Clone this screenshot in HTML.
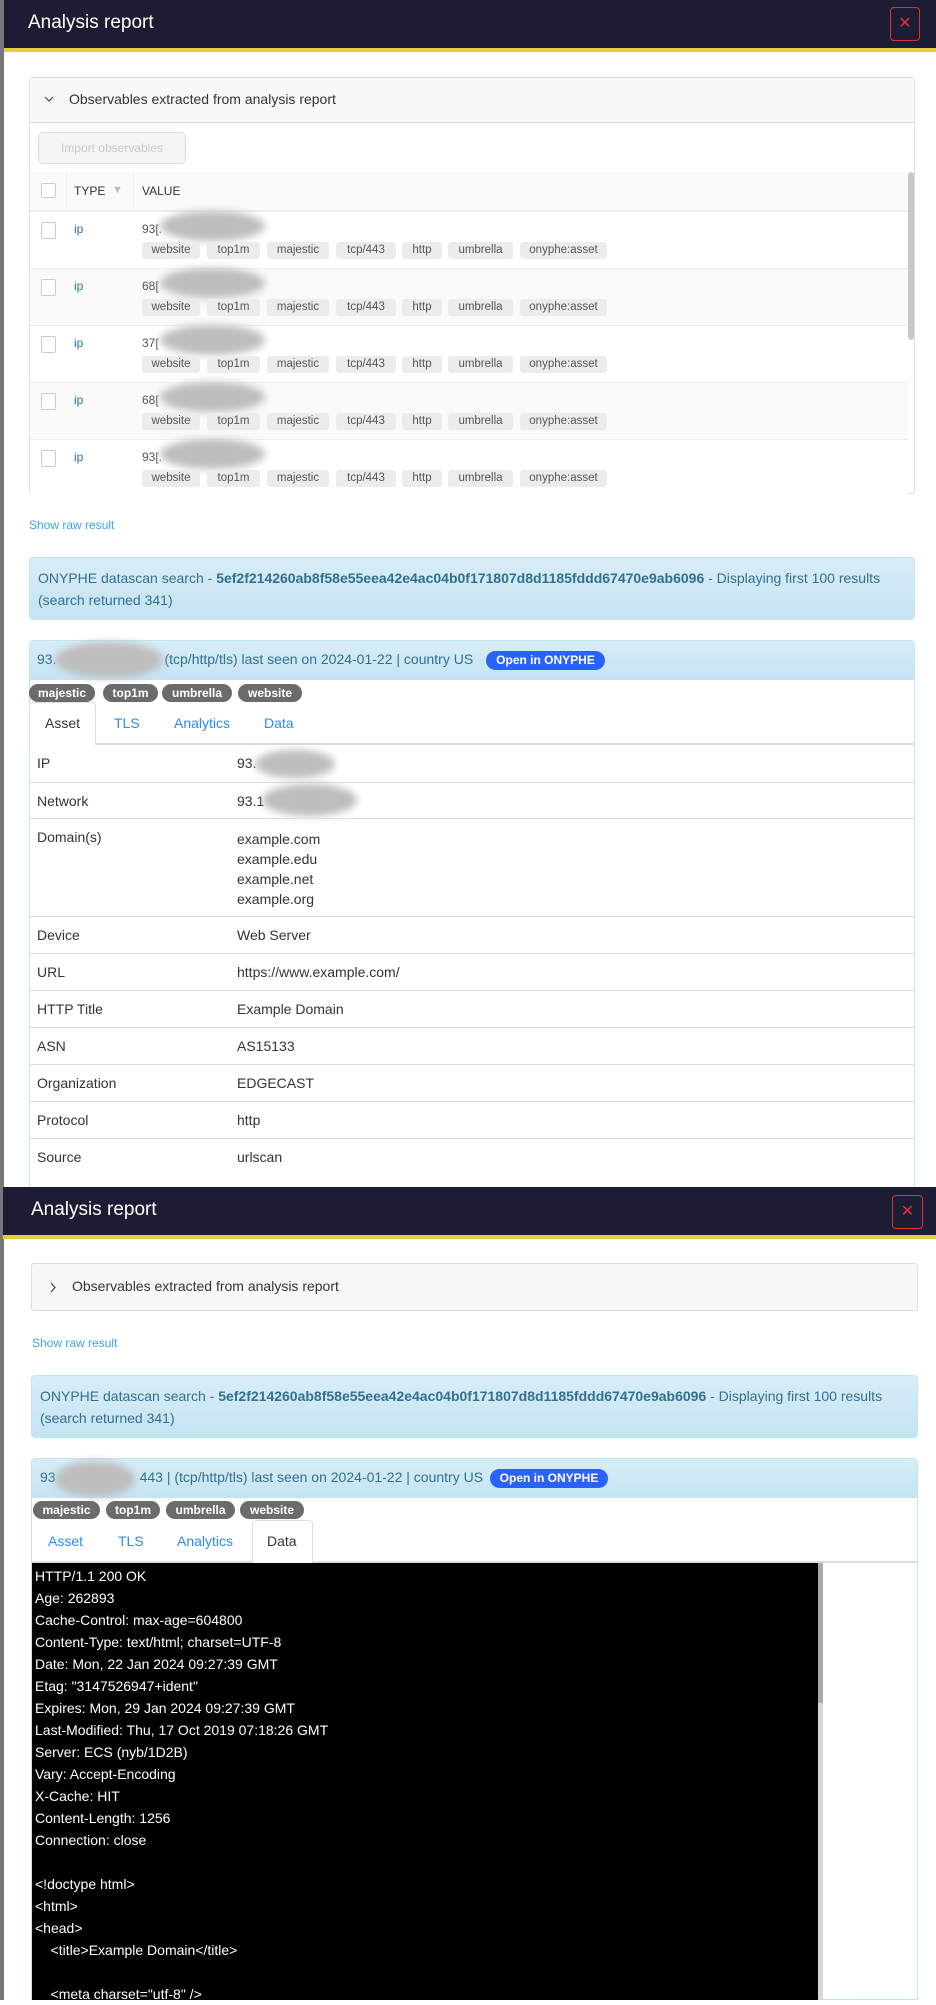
<!DOCTYPE html>
<html><head><meta charset="utf-8">
<style>
*{box-sizing:border-box;margin:0;padding:0}
body{width:936px;height:2000px;overflow:hidden;background:#fff;font-family:"Liberation Sans",sans-serif;position:relative;color:#333}
.a{position:absolute}
.hdr{background:#1c1c35;color:#fff;font-size:19px}
.ylw{background:#e8cd3a}
.close{border:1.5px solid #e0303a;border-radius:4px;color:#e0303a;font-size:16px;text-align:center}
.blur{background:#bdbdbd;border-radius:50%;filter:blur(4px)}
.tag{position:absolute;height:17px;background:#ececec;border-radius:3px;font-size:11.5px;color:#555;line-height:17px;text-align:center}
.cb{position:absolute;width:15px;height:15px;border:1px solid #ccc;border-radius:2px;background:#fff}
.dtag{position:absolute;height:18px;background:#6b6b6b;color:#fff;font-weight:bold;font-size:12px;border-radius:9px;line-height:18px;text-align:center}
.info{background:linear-gradient(#d9edf7,#c4e3f3);border:1px solid #bce8f1;border-radius:4px;color:#31708f;font-size:14px;line-height:22px}
.card{border:1px solid #bce8f1;border-radius:4px 4px 0 0}
.chd{background:linear-gradient(#d9edf7,#c4e3f3);color:#31708f;font-size:14px}
.open{background:#2962ff;color:#fff;font-weight:bold;font-size:12px;border-radius:10px;text-align:center;line-height:19px}
.tab{position:absolute;font-size:14px;color:#2a8cf0}
.row{position:absolute;left:30px;width:884px;border-top:1px solid #ddd;font-size:14px;color:#333}
.row span{position:absolute;top:10px}
.pre div{height:22px;line-height:22px;white-space:pre}
</style></head><body>
<div class="a" style="left:0;top:0;width:4px;height:2000px;background:#777"></div>

<!-- MODAL 1 -->
<div class="a hdr" style="left:4px;top:0;width:932px;height:48px"><div class="a" style="left:24px;top:12px">Analysis report</div></div>
<div class="a ylw" style="left:4px;top:48px;width:932px;height:4px"></div>
<div class="a close" style="left:890px;top:7px;width:30px;height:34px;line-height:31px">✕</div>

<div class="a" style="left:29px;top:77px;width:886px;height:417px;border:1px solid #ddd;border-radius:3px"></div>
<div class="a" style="left:30px;top:78px;width:884px;height:45px;background:#f8f8f8;border-bottom:1px solid #ddd"></div>
<svg class="a" style="left:44px;top:95px" width="10" height="8" viewBox="0 0 10 8"><path d="M1 2 L5 6 L9 2" fill="none" stroke="#444" stroke-width="1.2"/></svg>
<div class="a" style="left:69px;top:91px;font-size:14px;color:#333">Observables extracted from analysis report</div>
<div class="a" style="left:38px;top:132px;width:148px;height:32px;border:1px solid #ddd;border-radius:5px;background:#f5f5f5;color:#c8c8c8;font-size:12px;text-align:center;line-height:30px">Import observables</div>
<div class="a" style="left:30px;top:172px;width:878px;height:39px;background:#fafafa;border-bottom:1px solid #eee"></div>
<div class="a" style="left:66px;top:172px;width:1px;height:39px;background:#eee"></div>
<div class="a" style="left:133px;top:172px;width:1px;height:39px;background:#eee"></div>
<div class="cb" style="left:41px;top:183px"></div>
<div class="a" style="left:74px;top:184px;font-size:12px;color:#333">TYPE</div>
<div class="a" style="left:112px;top:184px;font-size:11px;color:#bbb">▼</div>
<div class="a" style="left:142px;top:184px;font-size:12px;color:#333">VALUE</div>
<div class="a" style="left:908px;top:172px;width:6px;height:168px;background:#c8c8c8;border-radius:3px"></div>

<div id="rows"></div>

<div class="a" style="left:29px;top:518px;font-size:12px;color:#3ea3e8">Show raw result</div>
<div class="a info" style="left:29px;top:557px;width:886px;height:63px;padding:9px 8px">ONYPHE datascan search - <b>5ef2f214260ab8f58e55eea42e4ac04b0f171807d8d1185fddd67470e9ab6096</b> - Displaying first 100 results (search returned 341)</div>

<div class="a card" style="left:29px;top:640px;width:886px;height:560px"></div>
<div class="a chd" style="left:30px;top:641px;width:884px;height:39px"></div>
<div class="a" style="left:37px;top:651px;font-size:14px;color:#31708f">93.<span style="display:inline-block;width:108px"></span>(tcp/http/tls) last seen on 2024-01-22 | country US</div>
<div class="a blur" style="left:55px;top:642px;width:108px;height:36px"></div>
<div class="a open" style="left:486px;top:651px;width:119px;height:19px">Open in ONYPHE</div>
<div class="dtag" style="left:29px;top:684px;width:66px">majestic</div>
<div class="dtag" style="left:103px;top:684px;width:55px">top1m</div>
<div class="dtag" style="left:162px;top:684px;width:70px">umbrella</div>
<div class="dtag" style="left:238px;top:684px;width:64px">website</div>
<div class="a" style="left:30px;top:743px;width:884px;height:2px;background:#ddd"></div>
<div class="a" style="left:29px;top:702px;width:67px;height:43px;border:1px solid #ddd;border-bottom:none;background:#fff;border-radius:4px 4px 0 0"></div>
<div class="tab" style="left:45px;top:715px;color:#333">Asset</div>
<div class="tab" style="left:114px;top:715px">TLS</div>
<div class="tab" style="left:174px;top:715px">Analytics</div>
<div class="tab" style="left:264px;top:715px">Data</div>

<div class="row" style="top:745px;height:37px;border-top:none"><span style="left:7px">IP</span><span style="left:207px">93.</span></div>
<div class="a blur" style="left:255px;top:750px;width:80px;height:28px"></div>
<div class="row" style="top:782px;height:36px"><span style="left:7px">Network</span><span style="left:207px">93.1</span></div>
<div class="a blur" style="left:262px;top:784px;width:95px;height:32px"></div>
<div class="row" style="top:818px;height:98px"><span style="left:7px">Domain(s)</span><span style="left:207px;line-height:20px">example.com<br>example.edu<br>example.net<br>example.org</span></div>
<div class="row" style="top:916px;height:37px"><span style="left:7px">Device</span><span style="left:207px">Web Server</span></div>
<div class="row" style="top:953px;height:37px"><span style="left:7px">URL</span><span style="left:207px">https://www.example.com/</span></div>
<div class="row" style="top:990px;height:37px"><span style="left:7px">HTTP Title</span><span style="left:207px">Example Domain</span></div>
<div class="row" style="top:1027px;height:37px"><span style="left:7px">ASN</span><span style="left:207px">AS15133</span></div>
<div class="row" style="top:1064px;height:37px"><span style="left:7px">Organization</span><span style="left:207px">EDGECAST</span></div>
<div class="row" style="top:1101px;height:37px"><span style="left:7px">Protocol</span><span style="left:207px">http</span></div>
<div class="row" style="top:1138px;height:50px"><span style="left:7px">Source</span><span style="left:207px">urlscan</span></div>

<!-- MODAL 2 -->
<div class="a" style="left:0;top:1187px;width:936px;height:813px;background:#fff"></div>
<div class="a" style="left:0;top:1187px;width:4px;height:813px;background:#777"></div>
<div class="a hdr" style="left:3px;top:1187px;width:933px;height:48px"><div class="a" style="left:28px;top:12px">Analysis report</div></div>
<div class="a ylw" style="left:3px;top:1235px;width:933px;height:4px"></div>
<div class="a close" style="left:892px;top:1195px;width:31px;height:34px;line-height:31px">✕</div>

<div class="a" style="left:31px;top:1263px;width:887px;height:48px;border:1px solid #ddd;border-radius:3px;background:#f8f8f8"></div>
<svg class="a" style="left:49px;top:1282px" width="8" height="11" viewBox="0 0 8 11"><path d="M2 1 L6 5.5 L2 10" fill="none" stroke="#444" stroke-width="1.2"/></svg>
<div class="a" style="left:72px;top:1278px;font-size:14px;color:#333">Observables extracted from analysis report</div>
<div class="a" style="left:32px;top:1336px;font-size:12px;color:#3ea3e8">Show raw result</div>
<div class="a info" style="left:31px;top:1375px;width:887px;height:63px;padding:9px 8px">ONYPHE datascan search - <b>5ef2f214260ab8f58e55eea42e4ac04b0f171807d8d1185fddd67470e9ab6096</b> - Displaying first 100 results (search returned 341)</div>

<div class="a card" style="left:31px;top:1458px;width:887px;height:542px"></div>
<div class="a chd" style="left:32px;top:1459px;width:885px;height:39px"></div>
<div class="a" style="left:40px;top:1469px;font-size:14px;color:#31708f">93<span style="display:inline-block;width:84px"></span>443 | (tcp/http/tls) last seen on 2024-01-22 | country US</div>
<div class="a blur" style="left:55px;top:1461px;width:80px;height:36px"></div>
<div class="a open" style="left:490px;top:1469px;width:118px;height:19px">Open in ONYPHE</div>
<div class="dtag" style="left:33px;top:1501px;width:67px">majestic</div>
<div class="dtag" style="left:106px;top:1501px;width:54px">top1m</div>
<div class="dtag" style="left:166px;top:1501px;width:69px">umbrella</div>
<div class="dtag" style="left:240px;top:1501px;width:64px">website</div>
<div class="a" style="left:32px;top:1561px;width:885px;height:2px;background:#ddd"></div>
<div class="a" style="left:252px;top:1520px;width:61px;height:43px;border:1px solid #ddd;border-bottom:none;background:#fff;border-radius:4px 4px 0 0"></div>
<div class="tab" style="left:48px;top:1533px">Asset</div>
<div class="tab" style="left:118px;top:1533px">TLS</div>
<div class="tab" style="left:177px;top:1533px">Analytics</div>
<div class="tab" style="left:267px;top:1533px;color:#333">Data</div>

<div class="a pre" style="left:32px;top:1563px;width:791px;height:437px;background:#000;color:#fff;font-size:14px;padding:2px 3px">
<div>HTTP/1.1 200 OK</div><div>Age: 262893</div><div>Cache-Control: max-age=604800</div><div>Content-Type: text/html; charset=UTF-8</div><div>Date: Mon, 22 Jan 2024 09:27:39 GMT</div><div>Etag: "3147526947+ident"</div><div>Expires: Mon, 29 Jan 2024 09:27:39 GMT</div><div>Last-Modified: Thu, 17 Oct 2019 07:18:26 GMT</div><div>Server: ECS (nyb/1D2B)</div><div>Vary: Accept-Encoding</div><div>X-Cache: HIT</div><div>Content-Length: 1256</div><div>Connection: close</div><div> </div><div>&lt;!doctype html&gt;</div><div>&lt;html&gt;</div><div>&lt;head&gt;</div><div>    &lt;title&gt;Example Domain&lt;/title&gt;</div><div> </div><div>    &lt;meta charset="utf-8" /&gt;</div>
</div>
<div class="a" style="left:818px;top:1563px;width:5px;height:437px;background:#d8d8d8"></div>
<div class="a" style="left:818px;top:1563px;width:5px;height:140px;background:#aaa"></div>

<script>
var vals=["93[.","68[","37[","68[","93[."];
var tags=[["website",142,58],["top1m",207,53],["majestic",267,62],["tcp/443",336,60],["http",402,40],["umbrella",448,65],["onyphe:asset",520,87]];
var h="";
for(var i=0;i<5;i++){var t=211+i*57;
h+='<div class="a" style="left:30px;top:'+t+'px;width:878px;height:57px;border-top:1px solid #eee;background:'+(i%2?'#fafafa':'#fff')+'"></div>';
h+='<div class="cb" style="left:41px;top:'+(t+11)+'px;height:17px"></div>';
h+='<div class="a" style="left:74px;top:'+(t+11)+'px;font-size:12px;color:#2a6fb0">ip</div>';
h+='<div class="a" style="left:142px;top:'+(t+11)+'px;font-size:12px;color:#555">'+vals[i]+'</div>';
h+='<div class="a blur" style="left:160px;top:'+(t+0)+'px;width:105px;height:30px"></div>';
for(var j=0;j<tags.length;j++)h+='<div class="tag" style="left:'+tags[j][1]+'px;top:'+(t+31)+'px;width:'+tags[j][2]+'px">'+tags[j][0]+'</div>';}
document.getElementById("rows").innerHTML=h;
</script>
</body></html>
